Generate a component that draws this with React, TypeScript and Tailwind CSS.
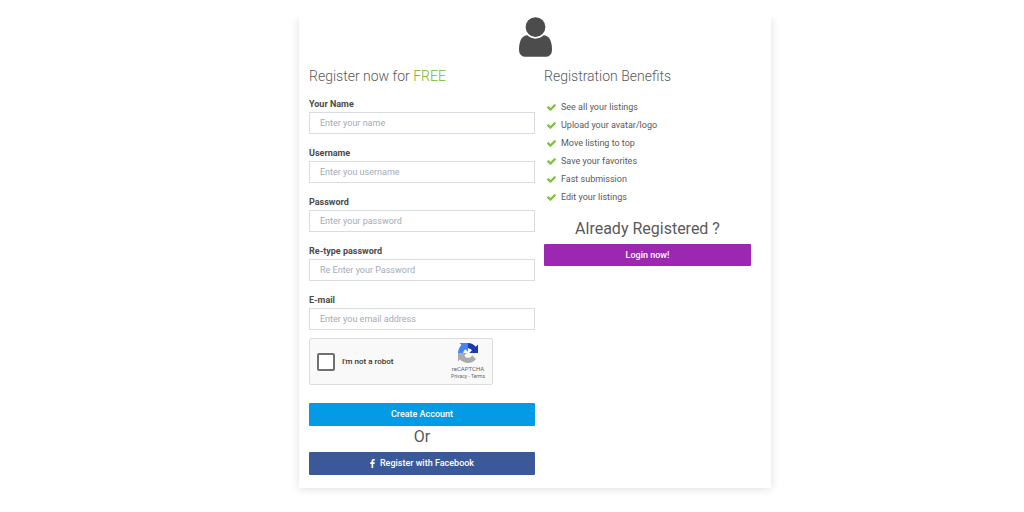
import React from "react";

type Field = { id: string; label: string; placeholder: string; type: string };

const fields: Field[] = [
  { id: "name", label: "Your Name", placeholder: "Enter your name", type: "text" },
  { id: "username", label: "Username", placeholder: "Enter you username", type: "text" },
  { id: "password", label: "Password", placeholder: "Enter your password", type: "password" },
  { id: "password2", label: "Re-type password", placeholder: "Re Enter your Password", type: "password" },
  { id: "email", label: "E-mail", placeholder: "Enter you email address", type: "email" },
];

const benefits = [
  "See all your listings",
  "Upload your avatar/logo",
  "Move listing to top",
  "Save your favorites",
  "Fast submission",
  "Edit your listings",
];

function UserIcon() {
  return (
    <svg viewBox="0 128 1280 1536" className="h-10 w-[33px] fill-[#4c4c4c]" aria-hidden="true">
      <path d="M1280 1399q0 109-62.5 187t-150.5 78h-854q-88 0-150.5-78t-62.5-187q0-85 8.5-160.5t31.5-152 58.5-131 94-89 134.5-34.5q131 128 313 128t313-128q76 0 134.5 34.5t94 89 58.5 131 31.5 152 8.5 160.5zm-256-887q0 159-112.5 271.5t-271.5 112.5-271.5-112.5-112.5-271.5 112.5-271.5 271.5-112.5 271.5 112.5 112.5 271.5z" />
    </svg>
  );
}

function CheckIcon() {
  return (
    <svg viewBox="121 334 1550 1188" className="h-[7px] w-[9px] shrink-0 fill-[#7fbd45]" aria-hidden="true">
      <path d="M1671 566q0 40-28 68l-724 724-136 136q-28 28-68 28t-68-28l-136-136-362-362q-28-28-28-68t28-68l136-136q28-28 68-28t68 28l294 295 656-657q28-28 68-28t68 28l136 136q28 28 28 68z" />
    </svg>
  );
}

function FacebookIcon() {
  return (
    <svg viewBox="479 0 864 1664" className="h-[9px] w-[5px] fill-white" aria-hidden="true">
      <path d="M1343 12v264h-157q-86 0-116 36t-30 108v189h293l-39 296h-254v759h-306v-759h-255v-296h255v-218q0-186 104-288.5t277-102.5q147 0 228 12z" />
    </svg>
  );
}

function RecaptchaLogo() {
  return (
    <svg viewBox="0 0 64 64" className="size-5" aria-hidden="true">
      <path fill="#1c3aa9" d="M64 32c0-.5 0-.9 0-1.4V4.600l-7.200 7.200C51 4.600 42.100 0 32.100 0 21.700 0 12.500 5 6.600 12.700l11.800 11.900c1.200-2.100 2.800-4 4.700-5.300 2-1.600 4.800-2.800 8.700-2.800.5 0 .8.100 1.100.2 4.800.4 9 3 11.500 6.900l-8.400 8.400H64z" />
      <path fill="#4285f4" d="M31.900 0c-.5 0-.9 0-1.400 0H4.600l7.200 7.200C4.600 13 0 21.900 0 31.900c0 10.400 5 19.600 12.700 25.500l11.900-11.800c-2.100-1.200-4-2.800-5.300-4.700-1.600-2-2.800-4.800-2.800-8.700 0-.5.100-.8.200-1.100.4-4.800 3-9 6.900-11.500l8.400 8.400L31.900 0z" />
      <path fill="#ababab" d="M0 32c0 .5 0 .9 0 1.400v26l7.200-7.200C13 59.400 21.900 64 31.900 64c10.400 0 19.600-5 25.500-12.700L45.600 39.400c-1.200 2.100-2.800 4-4.700 5.300-2 1.600-4.800 2.800-8.700 2.800-.5 0-.8-.1-1.100-.2-4.800-.4-9-3-11.500-6.900L28 32z" />
    </svg>
  );
}

function Recaptcha() {
  return (
    <div className="flex h-[47px] w-full max-w-[184px] items-center justify-between rounded-xs border border-[#dcdcdc] bg-[#f9f9f9] px-[7px]">
      <label className="flex items-center gap-[7px] text-[8px] font-medium text-[#333333]">
        <input
          type="checkbox"
          className="size-[18px] appearance-none rounded-xs border-2 border-[#707070] bg-white checked:bg-[#4285f4]"
        />
        I'm not a robot
      </label>
      <div className="flex flex-col items-center text-[#666666]">
        <RecaptchaLogo />
        <span className="mt-[2px] text-[6px] leading-[8px]">reCAPTCHA</span>
        <span className="text-[5px] leading-[7px]">
          <a href="#privacy">Privacy</a> - <a href="#terms">Terms</a>
        </span>
      </div>
    </div>
  );
}

export default function App() {
  return (
    <div className="min-h-screen bg-white pt-[17px] pl-[46px] font-['Roboto','Liberation_Sans',sans-serif] text-[#5a5a5a]">
      <div className="mx-auto max-w-[492px] overflow-hidden px-[10px] pb-[12px]">
        <main className="bg-white px-[10px] pb-[13px] shadow-[0_1px_9px_rgba(0,0,0,0.13)]">
          <div className="flex justify-center">
            <UserIcon />
          </div>
          <div className="mt-[9px] grid grid-cols-[226fr_217fr] gap-[9px]">
            <section>
              <h1 className="text-[14px] leading-5 font-light">
                Register now for <span className="text-[#73b82e]">FREE</span>
              </h1>
              <form className="mt-[10px]" onSubmit={(e) => e.preventDefault()}>
                <div className="flex flex-col gap-[11px]">
                  {fields.map((f) => (
                    <div key={f.id}>
                      <label htmlFor={f.id} className="block text-[9px] leading-4 font-bold text-[#4a4a4a]">
                        {f.label}
                      </label>
                      <input
                        id={f.id}
                        type={f.type}
                        placeholder={f.placeholder}
                        className="block h-[22px] w-full border border-[#d9dde2] bg-white px-[10px] text-[9px] placeholder:text-[#a3abb8]"
                      />
                    </div>
                  ))}
                </div>
                <div className="mt-[8px]">
                  <Recaptcha />
                </div>
                <button
                  type="submit"
                  className="mt-[18px] block h-[23px] w-full rounded-[1px] bg-[#039be5] text-[9px] font-medium text-white"
                >
                  Create Account
                </button>
                <p className="pb-[4px] text-center text-[16px] leading-[22px]">Or</p>
                <button
                  type="button"
                  className="flex h-[23px] w-full items-center justify-center gap-[5px] rounded-[1px] bg-[#3b5998] text-[9px] font-medium text-white"
                >
                  <FacebookIcon />
                  Register with Facebook
                </button>
              </form>
            </section>
            <section className="pr-[10px]">
              <h2 className="text-[14px] leading-5 font-light">Registration Benefits</h2>
              <ul className="mt-[12px] pl-[3px] text-[9px] leading-[18px]">
                {benefits.map((b) => (
                  <li key={b} className="flex items-center gap-[5px]">
                    <CheckIcon />
                    {b}
                  </li>
                ))}
              </ul>
              <h2 className="mt-[11px] text-center text-[16px] leading-[24px]">Already Registered ?</h2>
              <a
                href="#login"
                className="mt-[3px] block rounded-[1px] bg-[#9c27b0] text-center text-[9px] leading-[22px] font-medium text-white"
              >
                Login now!
              </a>
            </section>
          </div>
        </main>
      </div>
    </div>
  );
}
